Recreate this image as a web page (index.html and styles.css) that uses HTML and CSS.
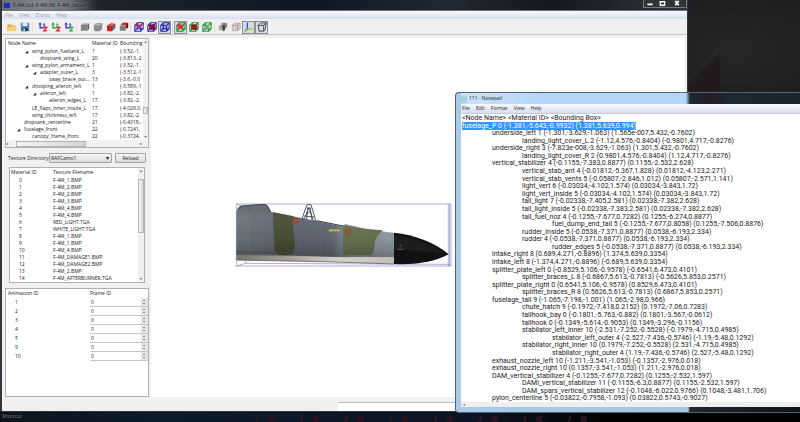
FILE: index.html
```html
<!DOCTYPE html>
<html lang="en">
<head>
<meta charset="utf-8">
<title>F-4M.lod F-4M.INI F-4M_data.ini</title>
<link rel="stylesheet" href="styles.css">
</head>
<body>
<svg class="defs" aria-hidden="true">
  <symbol id="axes" viewBox="0 0 24 24"><path d="M5 3v11h10" fill="none" stroke="currentColor" stroke-width="3"/><path d="M2 6l3-4 3 4M12 5h5l-4 5h5" fill="none" stroke="currentColor" stroke-width="2"/></symbol>
  <symbol id="cube" viewBox="0 0 24 24"><path d="M2 7l5-4h15l-4 4z" fill="#aaa"/><path d="M2 7h16v14H2z" fill="currentColor"/><path d="M18 7l4-4v13l-4 5z" fill="#666"/></symbol>
  <symbol id="wire" viewBox="0 0 24 24"><path d="M2 8h14v14H2zM8 2h14v14H8zM2 8l6-6M16 8l6-6M16 22l6-6M2 22l6-6" fill="none" stroke="currentColor" stroke-width="2.5"/></symbol>
</svg>

<main class="window viewer">
  <header class="titlebar">
    <span class="app-icon"></span><h1>F-4M.lod, F-4M.INI, F-4M_data.ini</h1>
    <div class="caption">
      <button aria-label="Minimize"><svg viewBox="0 0 12 8"><path d="M3 5h6" stroke="#fff" stroke-width="2"/></svg></button>
      <button aria-label="Restore"><svg viewBox="0 0 12 8"><path d="M4 2h5v4H4z" fill="none" stroke="#fff" stroke-width="1.5"/></svg></button>
      <button class="close" aria-label="Close"><svg viewBox="0 0 12 8"><path d="M4 1l4 5M8 1L4 6" stroke="#fff" stroke-width="2"/></svg></button>
    </div>
  </header>
  <nav class="menubar pale"><button>File</button><button>View</button><button>Extras</button><button>Help</button></nav>
  <div class="toolbar">
    <button aria-label="Open"><svg viewBox="0 0 24 24"><path d="M1 6h9l2 3h9v12H1z" fill="#d8a53e"/><path d="M4 11h20l-4 10H1z" fill="#f6d37a"/></svg></button>
    <button aria-label="Save"><svg viewBox="0 0 24 24"><path d="M2 2h20v20H2z" fill="#4d7fb0"/><path d="M6 2h12v8H6z" fill="#dfeaf4"/><path d="M6 14h12v8H6z" fill="#263f5b"/><path d="M8 16h4v5H8z" fill="#dfeaf4"/></svg></button>
    <span class="rule first"></span>
    <button aria-label="X axis"><svg class="blue" viewBox="0 0 24 24"><use href="#axes"/><path d="M14 13h7l-7 8h8" fill="none" stroke="#e02020" stroke-width="3"/></svg></button>
    <button aria-label="Y axis"><svg class="green" viewBox="0 0 24 24"><use href="#axes"/><path d="M14 13h7l-7 8h8" fill="none" stroke="#e02020" stroke-width="3"/></svg></button>
    <button aria-label="Z axis"><svg class="blue" viewBox="0 0 24 24"><use href="#axes"/><path d="M14 13h7l-7 8h8" fill="none" stroke="#20b040" stroke-width="3"/></svg></button>
    <span class="rule"></span>
    <button aria-label="Solid"><svg class="gray" viewBox="0 0 24 24"><use href="#cube"/></svg></button>
    <button aria-label="Smooth"><svg class="gray" viewBox="0 0 24 24"><path d="M2 8l6-5h14v13l-5 6H5l-3-4z" fill="#8c8c8c"/><path d="M4 9l5-4h11l-4 4z" fill="#b4b4b4"/></svg></button>
    <button aria-label="Selected solid"><svg viewBox="0 0 24 24"><path d="M2 9l10-6 10 1v10l-8 8H3z" fill="#bd2626"/><path d="M4 9l9-5 8 1-6 5z" fill="#e06060"/><path d="M15 10l7-6v10l-8 8z" fill="#666"/></svg></button>
    <button aria-label="Selected parts"><svg viewBox="0 0 24 24"><path d="M8 2h14v12l-6 3V8H8z" fill="#7a1414"/><path d="M2 9h14v12H2z" fill="#7d7d7d"/><path d="M8 3l-5 5h12l6-5z" fill="#d03434"/></svg></button>
    <span class="rule slim"></span>
    <button aria-label="Box all"><svg class="blue" viewBox="0 0 24 24"><path d="M3 8l8-4 7 7-6 7-9-2z" fill="#f0a0a0"/><use href="#wire"/><path d="M4 5l8 8 8-8" fill="none" stroke="#e02020" stroke-width="3"/></svg></button>
    <button aria-label="Box selected"><svg class="blue" viewBox="0 0 24 24"><use href="#wire"/><path d="M5 7l10-2 5 4v8l-8 3-7-3z" fill="#8c1030"/></svg></button>
    <button class="on" aria-label="Box node"><svg class="blue" viewBox="0 0 24 24"><path d="M5 8h13v11H5z" fill="#9a9ab0"/><use href="#wire"/></svg></button>
    <span class="rule"></span>
    <button class="on" aria-label="Hull all"><svg class="green" viewBox="0 0 24 24"><use href="#wire"/><path d="M3 8l8-4 7 7-6 7-9-2z" fill="#e05050"/><path d="M4 5l8 8 8-8" fill="none" stroke="#e02020" stroke-width="3"/></svg></button>
    <button aria-label="Hull selected"><svg class="green" viewBox="0 0 24 24"><use href="#wire"/><path d="M5 7l10-2 5 4v8l-8 3-7-3z" fill="#902020"/></svg></button>
    <button aria-label="Hull node"><svg class="green" viewBox="0 0 24 24"><use href="#wire"/><path d="M6 8h11v10H6z" fill="#8f9a8f"/></svg></button>
    <span class="rule"></span>
    <button aria-label="Shaded"><svg viewBox="0 0 24 24"><path d="M8 2h14v12H8z" fill="#888"/><path d="M2 8h14v12H2z" fill="#aaa"/><path d="M9 8h8v11l-5 3z" fill="#444"/></svg></button>
    <button aria-label="Transparent"><svg viewBox="0 0 24 24"><path d="M3 8l6-5h13v13l-6 5H3z" fill="#d6cccc" stroke="#998f8f" stroke-width="2" stroke-dasharray="3 2"/><path d="M3 8h13v13M16 8l6-5" fill="none" stroke="#998f8f" stroke-width="2"/></svg></button>
    <button class="on" aria-label="Show axes"><svg viewBox="0 0 24 24"><path d="M8 1v16" stroke="#2456d8" stroke-width="3"/><path d="M8 17h14" stroke="#c8b030" stroke-width="3"/><path d="M8 17l-6 5" stroke="#30a040" stroke-width="3"/></svg></button>
    <button class="on" aria-label="Show box"><svg class="dark" viewBox="0 0 24 24"><path d="M3 8h13v14H5zM3 8l6-6h13l-6 6M22 2l-2 14-4 6" fill="none" stroke="currentColor" stroke-width="2"/></svg></button>
  </div>
  <div class="workspace">
    <aside class="side">
      <section class="pane tree">
        <div class="clip">
        <table>
          <thead><tr><th>Node Name</th><th>Material ID</th><th>Bounding</th></tr></thead>
          <tbody>
            <tr><td class="n2 open">wing_pylon_fueltank_L</td><td>1</td><td>(-3.52,-1.</td></tr>
            <tr><td class="n3">droptank_wing_L</td><td>20</td><td>(-3.813,-2</td></tr>
            <tr><td class="n2 open">wing_pylon_armament_L</td><td>1</td><td>(-3.52,-1.</td></tr>
            <tr><td class="n3 open">adapter_outer_L</td><td>3</td><td>(-3.512,-1</td></tr>
            <tr><td class="n4">sway_brace_out...</td><td>13</td><td>(-3.6,-0.0</td></tr>
            <tr><td class="n2 open">drooping_aileron_left</td><td>1</td><td>(-3.589,-1</td></tr>
            <tr><td class="n3 open">aileron_left</td><td>1</td><td>(-3.82,-2.</td></tr>
            <tr><td class="n4">aileron_edges_L</td><td>17</td><td>(-3.82,-2.</td></tr>
            <tr><td class="n2">LE_flaps_inner_inside_L</td><td>17</td><td>(-4.029,0.</td></tr>
            <tr><td class="n2">wing_thickness_left</td><td>17</td><td>(-3.82,-2.</td></tr>
            <tr><td class="n1">droptank_centerline</td><td>21</td><td>(-0.4318,-</td></tr>
            <tr><td class="n1 open">fuselage_front</td><td>22</td><td>(-0.7241,</td></tr>
            <tr><td class="n2">canopy_frame_front</td><td>22</td><td>(-0.3724,</td></tr>
          </tbody>
        </table>
        </div>
        <div class="vbar"><i>▴</i><b class="low"></b><i>▾</i></div>
        <div class="hbar"><i>◂</i><b></b><i>▸</i></div>
      </section>
      <div class="directory">
        <label for="dir">Texture Directory:</label>
        <div class="picker"><select id="dir"><option>RAFCamo1</option></select></div>
        <button>Reload</button>
      </div>
      <section class="pane textures">
        <div class="clip">
        <table>
          <thead><tr><th>Material ID</th><th>Texture Filename</th></tr></thead>
          <tbody>
            <tr><td>0</td><td>F-4M_1.BMP</td></tr>
            <tr><td>1</td><td>F-4M_2.BMP</td></tr>
            <tr><td>2</td><td>F-4M_2.BMP</td></tr>
            <tr><td>3</td><td>F-4M_3.BMP</td></tr>
            <tr><td>4</td><td>F-4M_4.BMP</td></tr>
            <tr><td>5</td><td>F-4M_4.BMP</td></tr>
            <tr><td>6</td><td>RED_LIGHT.TGA</td></tr>
            <tr><td>7</td><td>WHITE_LIGHT.TGA</td></tr>
            <tr><td>8</td><td>F-4M_1.BMP</td></tr>
            <tr><td>9</td><td>F-4M_1.BMP</td></tr>
            <tr><td>10</td><td>F-4M_4.BMP</td></tr>
            <tr><td>11</td><td>F-4M_DAMAGE1.BMP</td></tr>
            <tr><td>12</td><td>F-4M_DAMAGE2.BMP</td></tr>
            <tr><td>13</td><td>F-4M_2.BMP</td></tr>
            <tr><td>14</td><td>F-4M_AFTERBURNER.TGA</td></tr>
          </tbody>
        </table>
        </div>
        <div class="vbar"><i>▴</i><b class="high"></b><i>▾</i></div>
      </section>
      <section class="pane frames">
        <table>
          <thead><tr><th>Animation ID</th><th>Frame ID</th></tr></thead>
          <tbody>
            <tr><td>1</td><td><input type="number" value="0" aria-label="Frame for animation 1"></td></tr>
            <tr><td>2</td><td><input type="number" value="0" aria-label="Frame for animation 2"></td></tr>
            <tr><td>3</td><td><input type="number" value="0" aria-label="Frame for animation 3"></td></tr>
            <tr><td>4</td><td><input type="number" value="0" aria-label="Frame for animation 4"></td></tr>
            <tr><td>5</td><td><input type="number" value="0" aria-label="Frame for animation 5"></td></tr>
            <tr><td>9</td><td><input type="number" value="0" aria-label="Frame for animation 9"></td></tr>
            <tr><td>10</td><td><input type="number" value="0" aria-label="Frame for animation 10"></td></tr>
          </tbody>
        </table>
      </section>
    </aside>
    <div class="viewport">
      <svg class="jet" viewBox="30 21 651 195" role="img" aria-label="Front fuselage model">
        <defs>
          <linearGradient id="skin" x1="0" x2="1" y1="0" y2="0"><stop offset="0" stop-color="#6d747c"/><stop offset=".35" stop-color="#5f646f"/><stop offset=".6" stop-color="#626874"/><stop offset=".72" stop-color="#8b929a"/><stop offset="1" stop-color="#929da8"/></linearGradient>
          <linearGradient id="shade" x1="0" x2="0" y1="0" y2="1"><stop offset="0" stop-color="#000" stop-opacity=".12"/><stop offset=".3" stop-color="#fff" stop-opacity=".04"/><stop offset=".65" stop-color="#000" stop-opacity=".04"/><stop offset="1" stop-color="#000" stop-opacity=".25"/></linearGradient>
          <linearGradient id="belly" x1="0" x2="1" y1="0" y2="0"><stop offset="0" stop-color="#77756f"/><stop offset=".35" stop-color="#a5a19a"/><stop offset=".65" stop-color="#d8d4cb"/><stop offset="1" stop-color="#c1bcb1"/></linearGradient>
        </defs>
        <path d="M34 27h644v186H34zM670 27v186M674 27v186M34 213l28-8 608 3 8 5M62 197v8M34 27l22 7" fill="none" stroke="#8886c4" stroke-width="2"/>
        <path d="M34 170L355 177l152 3v26L330 201 34 195z" fill="url(#belly)"/>
        <path d="M34 52c2-12 6-18 14-20l64-5c12 0 16 4 19 9l8 15 220 44v-8l57 13 50 8 41 6v72l-152 1-160-5-161-1z" fill="url(#skin)"/>
        <path d="M145 52l61 12c-4 20-2 40 1 60 4 20 4 42-4 51-10 8-38 8-49-1-10-12-4-28-6-46-3-28-5-50-3-76z" fill="#494f36"/>
        <path d="M355 90l59 11 60 5c-18 15-26 32-26 47-1 12-3 22-9 28h-84z" fill="#697350"/>
        <path d="M34 52c2-12 6-18 14-20l64-5c12 0 16 4 19 9l8 15 220 44v-8l57 13 50 8 41 6v72H355l-160-5-161-1z" fill="url(#shade)"/>
        <path d="M42 43c4-10 12-11 28-12l45-3c10 0 14 7 20 21z" fill="#666c73"/>
        <path d="M42 43c4-10 12-11 28-12l45-3c10 0 14 7 20 21" fill="none" stroke="#343a42" stroke-width="2"/>
        <path d="M231 71l15-42h12l15 50-8-1-13-41-15 36zM248 37l-3 37M255 37l6 38M238 63l30 3M256 49l-12 9" fill="none" stroke="#4c5662" stroke-width="3"/>
        <path d="M275 77l80 16" stroke="#333a43" stroke-width="3"/>
        <path d="M507 113c60 6 126 30 164 65-35 20-100 34-164 29z" fill="#101113"/>
        <path d="M507 119c58 8 120 30 151 57-54-10-91-8-151-15z" fill="#1b1d1f"/>
        <path d="M516 163h20M527 149l1 8" stroke="#777" stroke-width="2"/>
        <circle cx="211" cy="78" r="10" fill="#8b4c42"/><circle cx="211" cy="78" r="4" fill="#b05347"/>
        <circle cx="369" cy="111" r="11" fill="#7e5c3f"/><circle cx="369" cy="111" r="6" fill="#9e4f3d"/>
        <path d="M311 106h35M315 102v8M322 102v8M330 102v8M339 102v8" stroke="#c1ae57" stroke-width="4"/>
        <path d="M85 53v119M145 55v120M235 75v102M300 86v94M355 95v86M447 109v72M34 115h110M208 125l147 4" fill="none" stroke="#41474f" stroke-opacity=".35" stroke-width="1"/>
        <path d="M34 170l161 4M34 195l296 6 177 6" fill="none" stroke="#45433f" stroke-width="2"/>
      </svg>
    </div>
  </div>
  <footer class="status"><span></span></footer>
</main>

<section class="window notepad">
  <header class="titlebar"><svg viewBox="0 0 18 24"><path d="M2 3h14v19H2z" fill="#b9def0" stroke="#6797ae"/><path d="M4 8h10M4 12h10M4 16h10" stroke="#5694b4"/></svg><h2>111 - Notepad</h2></header>
  <nav class="menubar"><button>File</button><button>Edit</button><button>Format</button><button>View</button><button>Help</button></nav>
  <article class="text">
    <p>&lt;Node Name&gt; &lt;Material ID&gt; &lt;Bounding Box&gt;</p>
    <p><mark>fuselage_P 0 (-1.381,-5.643,-0.9932) (1.381,5.639,0.994)</mark></p>
    <p class="t1">underside_left 1 (-1.301,-3.629,-1.063) (1.565e-007,5.432,-0.7602)</p>
    <p class="t2">landing_light_cover_L 2 (-1.12,4.576,-0.8404) (-0.9801,4.717,-0.8276)</p>
    <p class="t1">underside_right 3 (-7.823e-008,-3.629,-1.063) (1.301,5.432,-0.7602)</p>
    <p class="t2">landing_light_cover_R 2 (0.9801,4.576,-0.8404) (1.12,4.717,-0.8276)</p>
    <p class="t1">vertical_stabilizer 4 (-0.1155,-7.383,0.8877) (0.1155,-2.532,2.628)</p>
    <p class="t2">vertical_stab_ant 4 (-0.01812,-5.367,1.828) (0.01812,-4.123,2.271)</p>
    <p class="t2">vertical_stab_vents 5 (-0.05807,-2.846,1.012) (0.05807,-2.571,1.141)</p>
    <p class="t2">light_vert 6 (-0.03034,-4.102,1.574) (0.03034,-3.843,1.72)</p>
    <p class="t2">light_vert_inside 5 (-0.03034,-4.102,1.574) (0.03034,-3.843,1.72)</p>
    <p class="t2">tail_light 7 (-0.02338,-7.405,2.581) (0.02338,-7.382,2.628)</p>
    <p class="t2">tail_light_inside 5 (-0.02338,-7.383,2.581) (0.02338,-7.382,2.628)</p>
    <p class="t2">tail_fuel_noz 4 (-0.1255,-7.677,0.7282) (0.1255,-6.274,0.8877)</p>
    <p class="t3">fuel_dump_end_tail 5 (-0.1255,-7.677,0.8058) (0.1255,-7.506,0.8876)</p>
    <p class="t2">rudder_inside 5 (-0.0538,-7.371,0.8877) (0.0538,-6.193,2.334)</p>
    <p class="t2">rudder 4 (-0.0538,-7.371,0.8877) (0.0538,-6.193,2.334)</p>
    <p class="t3">rudder_edges 5 (-0.0538,-7.371,0.8877) (0.0538,-6.193,2.334)</p>
    <p class="t1">intake_right 8 (0.689,4.271,-0.8896) (1.374,5.639,0.3354)</p>
    <p class="t1">intake_left 8 (-1.374,4.271,-0.8896) (-0.689,5.639,0.3354)</p>
    <p class="t1">splitter_plate_left 0 (-0.8529,5.106,-0.9578) (-0.6541,6.473,0.4101)</p>
    <p class="t2">splitter_braces_L 8 (-0.6867,5.613,-0.7813) (-0.5626,5.853,0.2571)</p>
    <p class="t1">splitter_plate_right 0 (0.6541,5.106,-0.9578) (0.8529,6.473,0.4101)</p>
    <p class="t2">splitter_braces_R 8 (0.5626,5.613,-0.7813) (0.6867,5.853,0.2571)</p>
    <p class="t1">fuselage_tail 9 (-1.065,-7.198,-1.001) (1.065,-2.98,0.966)</p>
    <p class="t2">chute_hatch 9 (-0.1972,-7.418,0.2152) (0.1972,-7.06,0.7283)</p>
    <p class="t2">tailhook_bay 0 (-0.1801,-5.763,-0.882) (0.1801,-3.567,-0.0612)</p>
    <p class="t2">tailhook 0 (-0.1349,-5.614,-0.9053) (0.1349,-3.296,-0.1156)</p>
    <p class="t2">stabilator_left_inner 10 (-2.531,-7.252,-0.5528) (-0.1979,-4.715,0.4985)</p>
    <p class="t3">stabilator_left_outer 4 (-2.527,-7.436,-0.5746) (-1.19,-5.48,0.1292)</p>
    <p class="t2">stabilator_right_inner 10 (0.1979,-7.252,-0.5528) (2.531,-4.715,0.4985)</p>
    <p class="t3">stabilator_right_outer 4 (1.19,-7.436,-0.5746) (2.527,-5.48,0.1292)</p>
    <p class="t1">exhaust_nozzle_left 10 (-1.211,-3.541,-1.053) (-0.1357,-2.976,0.018)</p>
    <p class="t1">exhaust_nozzle_right 10 (0.1357,-3.541,-1.053) (1.211,-2.976,0.018)</p>
    <p class="t1">DAM_vertical_stabilizer 4 (-0.1255,-7.677,0.7282) (0.1255,-2.532,1.597)</p>
    <p class="t2">DAMi_vertical_stabilizer 11 (-0.1155,-6.3,0.8877) (0.1155,-2.532,1.597)</p>
    <p class="t2">DAM_spars_vertical_stabilizer 12 (-0.1048,-6.022,0.9766) (0.1048,-3.481,1.706)</p>
    <p class="t1">pylon_centerline 5 (-0.03822,-0.7958,-1.093) (0.03822,0.5743,-0.9027)</p>
  </article>
  <div class="scroll">◂</div>
</section>
<p class="shortcut">Shortcut</p>
</body>
</html>
```
FILE: styles.css
```css
* { box-sizing: border-box; margin: 0; padding: 0; }
body {
  height: 100vh;
  overflow: hidden;
  position: relative;
  font: 5px/7px "Open Sans", "Noto Sans", sans-serif;
  color: #222;
  background:
    linear-gradient(135deg, transparent 46%, #241a1c 52%) 688px 46px / 32px 48px no-repeat,
    repeating-linear-gradient(100deg, transparent 0 26px, #2e1520 26px 28px, transparent 28px 38px, #28121e 38px 44px) 230px 100% / 370px 6px no-repeat,
    radial-gradient(ellipse at 92% 12%, #252728, transparent 26%),
    linear-gradient(90deg, #0b141d, #0c1a2a 20%, #0c1322 60%, #020304 75%) 0 100% / 100% 12px no-repeat,
    #101214;
}
button, input, select { font: inherit; color: inherit; border: 0; background: none; }
table { border-collapse: collapse; width: 100%; table-layout: fixed; }
th { font-weight: normal; text-align: left; }
th, td { white-space: nowrap; overflow: hidden; }
h1, h2 { font: inherit; }
.defs { display: none; }
.window { position: absolute; display: flex; flex-direction: column; }
.shortcut { position: absolute; left: 2px; bottom: 3px; line-height: 6px; color: #77818a; }

.viewer {
  inset: 0 14% 10px 0;
  padding: 0 1px 1px 2px;
  background: #34373a;
}
.viewer > .titlebar {
  display: flex;
  align-items: center;
  gap: 3px;
  height: 11px;
  padding-left: 2px;
  border-bottom: 1px solid #6c7075;
  color: #000;
  background: linear-gradient(90deg, #6b7074, #7d8286 6%, #6b7074 10%, #20242b 14%, #0d1725 45%, #222831 65%, #15181f 80%, #30333a);
}
.viewer h1 { text-shadow: 0 0 2px #ccc; }
.app-icon { width: 6px; height: 5px; background: #1c2fc4; }
.caption { margin: 0 0 auto auto; display: flex; border: 1px solid #74777b; border-top: 0; }
.caption button { width: 12px; height: 7px; display: flex; background: #303338; }
.caption .close { width: 18px; }
.caption svg { width: 100%; height: 7px; }
.menubar {
  display: flex;
  gap: 6px;
  height: 8px;
  flex: none;
  align-items: center;
  padding: 0 3px;
  background: linear-gradient(#f7f9fd, #d7deef);
}
.menubar.pale { color: #9ba1ae; }
.toolbar {
  display: flex;
  align-items: center;
  height: 16px;
  flex: none;
  padding: 1px 0 0 3px;
  background: #f0f0f0;
  border-bottom: 1px solid #c6c6c6;
}
.toolbar button { width: 13px; height: 13px; display: grid; place-items: center; border: 1px solid transparent; }
.toolbar button.on { background: #d5dbe3; border-color: #8b8f96; }
.toolbar svg { width: 10px; height: 10px; }
.rule { width: 2px; height: 10px; border-left: 1px solid #ddd; margin-left: 1px; }
.rule.first { width: 4px; }
.rule.slim { margin-left: 0; }
.blue { color: #2424c0; }
.green { color: #14962e; }
.gray { color: #858585; }
.dark { color: #333; }

.workspace { flex: 1; min-height: 0; display: flex; gap: 2px; padding: 3px 2px 0 3px; background: #f0f0f0; }
.side { width: 144px; flex: none; display: flex; flex-direction: column; }
.pane { background: #fff; border: 1px solid #aeb2b8; overflow: hidden; }
.pane th { height: 9px; }
.clip { overflow: hidden; min-height: 0; }
.tree { height: 110px; flex: none; display: grid; grid-template: 1fr 7px / 1fr 5px; }
.tree table { height: 101px; }
.tree th:first-child { width: 86px; padding-left: 2px; }
.tree th:nth-child(2) { width: 28px; }
.n1 { padding-left: 18px; }
.n2 { padding-left: 26px; }
.n3 { padding-left: 34px; }
.n4 { padding-left: 43px; }
.open::before { content: "◢"; display: inline-block; width: 7px; margin-left: -7px; font: 4px/5px "DejaVu Sans", sans-serif; color: #222; }
.vbar, .hbar { display: flex; justify-content: space-between; align-items: center; background: #f1f1f1; }
.vbar { flex-direction: column; }
.vbar i, .hbar i { font: 4px/6px "DejaVu Sans", sans-serif; color: #555; }
.vbar b, .hbar b { background: linear-gradient(90deg, #f5f5f5, #d4d4d4); border: 1px solid #b5b5b5; }
.vbar b { width: 100%; }
.low { height: 7px; margin-top: 41px; }
.high { height: 54px; margin-bottom: 38px; }
.hbar { grid-column: 1 / -1; padding-right: 6px; }
.hbar b { width: 70px; height: 6px; margin-right: 46px; }
.directory { display: flex; align-items: center; height: 10px; margin: 5px 3px 4px 3px; flex: none; gap: 1px; }
.directory label { width: 40px; white-space: nowrap; }
.picker { position: relative; flex: 1; }
.picker::after { content: "▾"; position: absolute; right: 3px; top: 0; font: 6px/10px "DejaVu Sans", sans-serif; color: #111; }
.directory select { appearance: none; display: block; width: 100%; height: 10px; padding: 0 1px; }
.directory select, .directory button { border: 1px solid #a2a2a2; border-radius: 1px; background: linear-gradient(#f5f5f5, #dcdcdc); line-height: 8px; }
.directory button { width: 31px; height: 10px; margin-left: 2px; }
.textures { height: 116px; flex: none; margin: 0 4px 5px; display: grid; grid-template-columns: 1fr 6px; }
.textures table { height: 114px; }
.textures th:first-child { width: 43px; padding-left: 1px; }
.textures td:first-child { padding-left: 9px; }
.frames { flex: 1; }
.frames table { height: 71px; }
.frames th:first-child { width: 84px; padding-left: 2px; }
.frames td:first-child { padding-left: 9px; }
.frames td + td { border-bottom: 1px solid #c6c6c6; }
.frames input {
  appearance: textfield;
  display: block;
  width: 100%;
  height: 8px;
  padding-left: 1px;
  background:
    linear-gradient(#888, #888) calc(100% - 3px) 2px / 2px 1px no-repeat,
    linear-gradient(#888, #888) calc(100% - 3px) 5px / 2px 1px no-repeat,
    linear-gradient(#e4e4e4, #e4e4e4) 100% 0 / 7px 100% no-repeat;
}
.frames input::-webkit-inner-spin-button { display: none; }
.viewport { flex: 1; background: #fff; padding: 164px 0 0 84px; overflow: hidden; }
.jet { display: block; width: 217px; height: 65px; }
.status { height: 14px; flex: none; display: flex; align-items: flex-end; background: #f0f0f0; }
.status span { margin-left: auto; width: 51%; height: 9px; background: #fff; border-top: 1px solid #bbb; }

.notepad {
  inset: 92px 0 9px 455px;
  padding: 0 0 5px 5px;
  background: linear-gradient(90deg, #a9cbe8, #a6c6df 232px, #20262e 234px, #10141a);
  border: 1px solid #56636f;
  border-right: 0;
  border-radius: 4px 0 0 4px;
}
.notepad > .titlebar {
  display: flex;
  align-items: center;
  gap: 2px;
  height: 11px;
  flex: none;
  background: linear-gradient(90deg, #cfe3f8, #b4d6f8 80px, #b4d6f8 225px, #1d2732 229px, #241d28 250px, #1d2934 270px, #1c242d);
}
.notepad > .titlebar svg { width: 6px; height: 8px; }
.notepad .menubar { height: 10px; padding: 0 1px; border-bottom: 1px solid #c4cad8; }
.text {
  flex: 1;
  min-height: 0;
  display: grid;
  grid-auto-rows: 1fr;
  padding-left: 1px;
  background: #fff;
  font: 7px/8px Roboto, "Liberation Sans", sans-serif;
  white-space: nowrap;
}
.text p { min-height: 0; }
.text mark { color: #fff; background: #3296f4; }
.t1 { padding-left: 30px; }
.t2 { padding-left: 60px; }
.t3 { padding-left: 90px; }
.scroll { height: 5px; flex: none; background: #eee; font: 4px/5px "DejaVu Sans", sans-serif; color: #666; padding-left: 2px; }
```
